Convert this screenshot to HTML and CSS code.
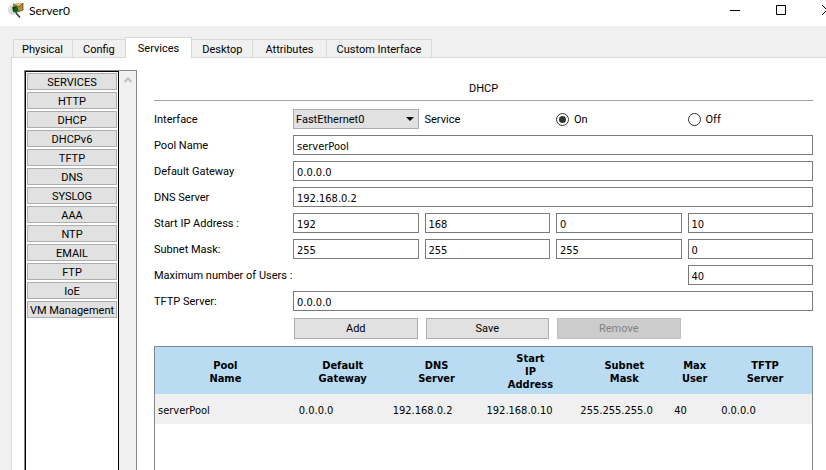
FILE: index.html
```html
<!DOCTYPE html>
<html lang="en">
<head>
<meta charset="utf-8">
<title>Server0</title>
<link rel="stylesheet" href="styles.css">
</head>
<body>
<header class="titlebar">
  <svg class="app-icon" width="16" height="16" viewBox="0 0 16 16" aria-hidden="true">
    <ellipse cx="4.500" cy="7" rx="4.500" ry="5" fill="#d9dcdc"/>
    <path d="M5 1 15 0v7l-5 2-5-2z" fill="#b98a3c"/>
    <path d="m5 1 10-1-4 4z" fill="#e3bd72"/>
    <path d="m5 1 6 3 4-4v7l-5 2" fill="none" stroke="#5a3c10" stroke-width=".7"/>
    <path d="M4.500 4 9 3.500l1.500 3L9 10l-4-1z" fill="#0b6b18"/>
    <path d="m4.500 4 4-.5L5 8z" fill="#063d0c"/>
    <path d="m8 10 4 4.500" stroke="#333" stroke-width="1.500"/>
  </svg>
  <h1 class="title">Server0</h1>
  <div class="window-controls">
    <button type="button" aria-label="Minimize"><svg width="10" height="10" viewBox="0 0 10 10"><path d="M0 5.500h10"/></svg></button>
    <button type="button" aria-label="Maximize"><svg width="10" height="10" viewBox="0 0 10 10"><path d="M.5.5h9v9h-9z"/></svg></button>
    <button type="button" aria-label="Close"><svg width="10" height="10" viewBox="0 0 10 10"><path d="m0 0 10 10M10 0 0 10"/></svg></button>
  </div>
</header>
<nav class="tabs" role="tablist">
  <button type="button" role="tab" class="tab tab-physical">Physical</button>
  <button type="button" role="tab" class="tab">Config</button>
  <button type="button" role="tab" class="tab tab-active" aria-selected="true">Services</button>
  <button type="button" role="tab" class="tab">Desktop</button>
  <button type="button" role="tab" class="tab tab-roomy">Attributes</button>
  <button type="button" role="tab" class="tab">Custom Interface</button>
</nav>
<main class="pane">
  <aside class="services">
    <div class="service-list">
      <button type="button">SERVICES</button>
      <button type="button">HTTP</button>
      <button type="button">DHCP</button>
      <button type="button">DHCPv6</button>
      <button type="button">TFTP</button>
      <button type="button">DNS</button>
      <button type="button">SYSLOG</button>
      <button type="button">AAA</button>
      <button type="button">NTP</button>
      <button type="button">EMAIL</button>
      <button type="button">FTP</button>
      <button type="button">IoE</button>
      <button type="button">VM Management</button>
    </div>
    <div class="scrollbar"><svg width="8" height="6" viewBox="0 0 8 6" aria-hidden="true"><path d="m.5 5 3.500-3.500L7.500 5"/></svg></div>
  </aside>
  <section class="content">
    <h2 class="heading">DHCP</h2>
    <form class="form">
      <label for="iface">Interface</label>
      <span class="select">
        <select id="iface"><option>FastEthernet0</option></select>
        <svg width="8" height="4" viewBox="0 0 8 4" aria-hidden="true"><path d="M0 0h8L4 4z"/></svg>
      </span>
      <span class="service-label">Service</span>
      <label class="radio"><input type="radio" name="service" checked>On</label>
      <label class="radio"><input type="radio" name="service">Off</label>

      <label for="pool">Pool Name</label>
      <input class="wide" id="pool" type="text" value="serverPool">

      <label for="gateway">Default Gateway</label>
      <input class="wide" id="gateway" type="text" value="0.0.0.0">

      <label for="dns">DNS Server</label>
      <input class="wide" id="dns" type="text" value="192.168.0.2">

      <label for="ip">Start IP Address :</label>
      <input id="ip" type="text" value="192">
      <input type="text" value="168" aria-label="Start IP octet 2">
      <input type="text" value="0" aria-label="Start IP octet 3">
      <input type="text" value="10" aria-label="Start IP octet 4">

      <label for="mask">Subnet Mask:</label>
      <input id="mask" type="text" value="255">
      <input type="text" value="255" aria-label="Mask octet 2">
      <input type="text" value="255" aria-label="Mask octet 3">
      <input type="text" value="0" aria-label="Mask octet 4">

      <label for="users">Maximum number of Users :</label>
      <input class="last" id="users" type="text" value="40">

      <label for="tftp">TFTP Server:</label>
      <input class="wide" id="tftp" type="text" value="0.0.0.0">

      <button class="action action-first" type="button">Add</button>
      <button class="action" type="button">Save</button>
      <button class="action" type="button" disabled>Remove</button>
    </form>
    <div class="pools">
      <table>
        <colgroup><col class="col-pool"><col><col><col><col><col class="col-max"><col></colgroup>
        <thead>
          <tr><th>Pool<br>Name</th><th>Default<br>Gateway</th><th>DNS<br>Server</th><th>Start<br>IP<br>Address</th><th>Subnet<br>Mask</th><th>Max<br>User</th><th>TFTP<br>Server</th></tr>
        </thead>
        <tbody>
          <tr><td>serverPool</td><td>0.0.0.0</td><td>192.168.0.2</td><td>192.168.0.10</td><td>255.255.255.0</td><td>40</td><td>0.0.0.0</td></tr>
        </tbody>
      </table>
    </div>
  </section>
</main>
</body>
</html>
```
FILE: styles.css
```css
* { box-sizing: border-box; }

body {
  margin: 0;
  height: 100vh;
  display: flex;
  flex-direction: column;
  overflow: hidden;
  background: #f0f0f0;
  color: #000;
  font: 11px/13px Roboto, sans-serif;
}

button, input, select {
  font: inherit;
  color: inherit;
  margin: 0;
  border-radius: 0;
}

/* Title bar */
.titlebar {
  display: flex;
  align-items: flex-start;
  height: 26px;
  padding-left: 8px;
  background: #fff;
}
.app-icon { margin: 3px 5px 0 0; }
.title {
  margin: 0;
  font: 12px/22px Lato, sans-serif;
}
.window-controls {
  display: flex;
  margin: 0 -24px 0 auto;
}
.window-controls button {
  width: 46px;
  height: 20px;
  padding: 0;
  border: 0;
  background: none;
}
.window-controls svg {
  display: block;
  margin: 0 auto;
  fill: none;
  stroke: #000;
}

/* Tabs */
.tabs {
  display: flex;
  align-items: flex-end;
  padding: 11px 0 0 13px;
}
.tab {
  height: 18px;
  padding: 1px 10px 0;
  border: 1px solid #d9d9d9;
  border-width: 1px 1px 0 0;
  background: #f0f0f0;
}
.tab-physical {
  padding: 1px 9px 0 8px;
  border-left-width: 1px;
}
.tab-roomy { padding: 1px 12px 0; }
.tab-active {
  position: relative;
  height: 21px;
  margin: 0 0 -1px -1px;
  padding: 0 12px;
  border-left-width: 1px;
  background: #fff;
}

/* Pane */
.pane {
  flex: 1;
  display: flex;
  gap: 17px;
  min-height: 0;
  margin-left: 11px;
  padding: 12px 13px 0 12px;
  border: 1px solid #d9d9d9;
  border-width: 1px 0 0 1px;
  background: #fff;
}

.services {
  display: flex;
  flex: none;
  width: 113px;
  border: 1px solid #828790;
  border-bottom: 0;
}
.service-list {
  display: flex;
  flex: 1;
  flex-direction: column;
  gap: 2px;
  padding: 1px;
  border: 1px solid #000;
  border-bottom: 0;
}
.service-list button {
  flex: none;
  height: 17px;
  padding: 1px 0 0;
  border: 1px solid #adadad;
  background: #e1e1e1;
  white-space: nowrap;
}
.scrollbar {
  width: 17px;
  padding-top: 6px;
  background: #f0f0f0;
}
.scrollbar svg {
  display: block;
  margin: 0 auto;
  fill: none;
  stroke: #bfbfbf;
  stroke-width: 2;
}

/* Content */
.content {
  display: flex;
  flex: 1;
  flex-direction: column;
  min-width: 0;
}
.heading {
  margin: 0 0 8px;
  padding: 12px 0 5px;
  border-bottom: 1px solid #a0a0a0;
  font-size: 11px;
  font-weight: 400;
  line-height: 13px;
  text-align: center;
}
.form {
  display: grid;
  grid-template-columns: 133px repeat(4, 1fr);
  grid-auto-rows: 20px;
  gap: 6px;
  align-items: center;
}
.form label { white-space: nowrap; }
.form input[type="text"] {
  width: 100%;
  height: 20px;
  padding: 2px 3px 0;
  border: 1px solid #7a7a7a;
  background: #fff;
  font-family: "DejaVu Sans Condensed", "DejaVu Sans", sans-serif;
}
.form .wide { grid-column: 2 / -1; }
.form .last { grid-column: 5; }

.select {
  display: grid;
  align-items: center;
}
.select select {
  grid-area: 1 / 1;
  width: 100%;
  height: 20px;
  padding: 0 2px;
  border: 1px solid #adadad;
  background: #e1e1e1;
  appearance: none;
}
.select svg {
  grid-area: 1 / 1;
  justify-self: end;
  margin-right: 5px;
  pointer-events: none;
}

.radio {
  display: flex;
  align-items: center;
  gap: 5px;
}
.radio input {
  width: 13px;
  height: 13px;
  border: 1px solid #333;
  border-radius: 50%;
  background: #fff;
  appearance: none;
}
.radio input:checked {
  padding: 2px;
  background: #333 content-box;
}

.action {
  height: 21px;
  margin: 2px 1px 0;
  padding: 1px 0 0;
  border: 1px solid #adadad;
  background: #e1e1e1;
}
.action-first { grid-column: 2; }
.action:disabled {
  border-color: #bfbfbf;
  background: #ccc;
  color: #838383;
}

/* Pool table */
.pools {
  flex: 1;
  margin-top: 9px;
  border: 1px solid #828790;
  border-bottom: 0;
}
.pools table {
  width: 100%;
  table-layout: fixed;
  border-collapse: collapse;
  font-family: "DejaVu Sans Condensed", "DejaVu Sans", sans-serif;
}
.col-pool { width: 21.43%; }
.col-max { width: 7.14%; }
.pools th {
  height: 47px;
  padding: 2px 0 0;
  background: #badcf3;
  font-weight: 700;
}
.pools td {
  height: 30px;
  padding: 2px 3px 0;
  background: #f0f0f0;
}
```
